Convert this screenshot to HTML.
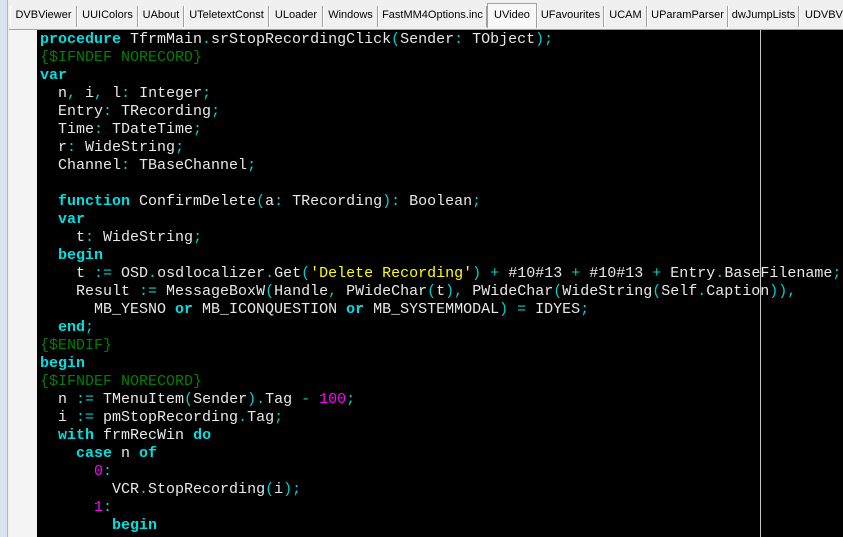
<!DOCTYPE html>
<html><head><style>
*{margin:0;padding:0;box-sizing:border-box}
body{width:843px;height:537px;overflow:hidden;background:#f0f0f0;position:relative;font-family:"Liberation Sans",sans-serif}
#strip{position:absolute;left:0;top:0;width:8px;height:537px;background:#d9e3ee;border-right:1px solid #aab8c8}
#tabs{position:absolute;left:9px;top:0;width:834px;height:29px;background:#f0f0f0}
.tab{position:absolute;top:6px;height:21px;font-size:11px;line-height:19px;text-align:center;color:#000;border-right:1px solid #a0a0a0;border-left:1px solid #fff;white-space:nowrap;overflow:hidden}
.tab.sel{top:3px;height:25px;background:#f8f8f8;border:1px solid #a0a0a0;border-bottom:none;line-height:23px}
#gutter{position:absolute;left:9px;top:29px;width:28px;height:508px;background:#f4f4f4;border-top:1px solid #a0a0a0}
#ed{position:absolute;left:37px;top:29px;width:806px;height:508px;background:#000;border-top:1px solid #a0a0a0;overflow:hidden}
#margin{position:absolute;left:723px;top:0;width:1px;height:508px;background:#c8c8c8}
pre{position:absolute;left:3px;top:1px;font-family:"Liberation Mono",monospace;font-size:15px;line-height:18px;color:#e8e8e8;white-space:pre}
.k{color:#00e0e0;font-weight:bold}
.s{color:#00d0d0}
.d{color:#008000}
.y{color:#ffff00}
.m{color:#ff00ff}
</style></head><body>
<div id="strip"></div>
<div id="tabs">
<div class="tab" style="left:1px;width:67px">DVBViewer</div>
<div class="tab" style="left:68px;width:61px">UUIColors</div>
<div class="tab" style="left:129px;width:46px">UAbout</div>
<div class="tab" style="left:175px;width:85px">UTeletextConst</div>
<div class="tab" style="left:260px;width:54px">ULoader</div>
<div class="tab" style="left:314px;width:55px">Windows</div>
<div class="tab" style="left:369px;width:109px">FastMM4Options.inc</div>
<div class="tab sel" style="left:478px;width:50px">UVideo</div>
<div class="tab" style="left:528px;width:67px">UFavourites</div>
<div class="tab" style="left:595px;width:43px">UCAM</div>
<div class="tab" style="left:638px;width:81px">UParamParser</div>
<div class="tab" style="left:719px;width:71px">dwJumpLists</div>
<div class="tab" style="left:790px;width:50px;text-align:left;padding-left:5px">UDVBViewer</div>
</div>
<div id="gutter"></div>
<div id="ed"><div id="margin"></div>
<pre><span class="k">procedure</span> TfrmMain<span class="s">.</span>srStopRecordingClick<span class="s">(</span>Sender<span class="s">:</span> TObject<span class="s">);</span>
<span class="d">{$IFNDEF NORECORD}</span>
<span class="k">var</span>
  n<span class="s">,</span> i<span class="s">,</span> l<span class="s">:</span> Integer<span class="s">;</span>
  Entry<span class="s">:</span> TRecording<span class="s">;</span>
  Time<span class="s">:</span> TDateTime<span class="s">;</span>
  r<span class="s">:</span> WideString<span class="s">;</span>
  Channel<span class="s">:</span> TBaseChannel<span class="s">;</span>

  <span class="k">function</span> ConfirmDelete<span class="s">(</span>a<span class="s">:</span> TRecording<span class="s">):</span> Boolean<span class="s">;</span>
  <span class="k">var</span>
    t<span class="s">:</span> WideString<span class="s">;</span>
  <span class="k">begin</span>
    t <span class="s">:=</span> OSD<span class="s">.</span>osdlocalizer<span class="s">.</span>Get<span class="s">(</span><span class="y">'Delete Recording'</span><span class="s">)</span> <span class="s">+</span> #10#13 <span class="s">+</span> #10#13 <span class="s">+</span> Entry<span class="s">.</span>BaseFilename<span class="s">;</span>
    Result <span class="s">:=</span> MessageBoxW<span class="s">(</span>Handle<span class="s">,</span> PWideChar<span class="s">(</span>t<span class="s">),</span> PWideChar<span class="s">(</span>WideString<span class="s">(</span>Self<span class="s">.</span>Caption<span class="s">)),</span>
      MB_YESNO <span class="k">or</span> MB_ICONQUESTION <span class="k">or</span> MB_SYSTEMMODAL<span class="s">)</span> <span class="s">=</span> IDYES<span class="s">;</span>
  <span class="k">end</span><span class="s">;</span>
<span class="d">{$ENDIF}</span>
<span class="k">begin</span>
<span class="d">{$IFNDEF NORECORD}</span>
  n <span class="s">:=</span> TMenuItem<span class="s">(</span>Sender<span class="s">).</span>Tag <span class="s">-</span> <span class="m">100</span><span class="s">;</span>
  i <span class="s">:=</span> pmStopRecording<span class="s">.</span>Tag<span class="s">;</span>
  <span class="k">with</span> frmRecWin <span class="k">do</span>
    <span class="k">case</span> n <span class="k">of</span>
      <span class="m">0</span><span class="s">:</span>
        VCR<span class="s">.</span>StopRecording<span class="s">(</span>i<span class="s">);</span>
      <span class="m">1</span><span class="s">:</span>
        <span class="k">begin</span>
</pre></div>
</body></html>
